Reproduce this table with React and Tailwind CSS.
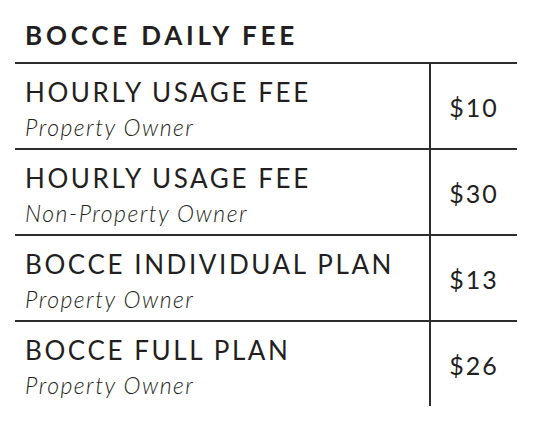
const rows = [
  { name: "HOURLY USAGE FEE", who: "Property Owner", price: "$10" },
  { name: "HOURLY USAGE FEE", who: "Non-Property Owner", price: "$30" },
  { name: "BOCCE INDIVIDUAL PLAN", who: "Property Owner", price: "$13" },
  { name: "BOCCE FULL PLAN", who: "Property Owner", price: "$26" },
];

export default function App() {
  return (
    <div className="w-[537px] h-[422px] bg-white text-[#231f20] font-['Lato',sans-serif]">
      <div className="w-[502px] ml-[15px] pt-[20px]">
        <h2 className="pl-[10px] text-[26px] leading-[30px] font-bold tracking-[3.8px] h-[42px]">
          BOCCE DAILY FEE
        </h2>
        <div className="border-t-2 border-[#2d2d2d]">
          {rows.map((r, i) => (
            <div
              key={i}
              className={
                "grid grid-cols-[414px_1fr] " +
                (i < rows.length - 1 ? "h-[86px] border-b-2 border-[#2d2d2d]" : "h-[84px]")
              }
            >
              <div className="pl-[10px] flex flex-col justify-center pt-[8px]">
                <div className="text-[26px] leading-[34px] tracking-[2.6px]">
                  {r.name}
                </div>
                <div className="text-[23px] leading-[36px] italic font-light tracking-[1.5px]">
                  {r.who}
                </div>
              </div>
              <div className="border-l-2 border-[#2d2d2d] flex items-center justify-center pt-[4px]">
                <span className="text-[25px] tracking-[2px]">{r.price}</span>
              </div>
            </div>
          ))}
        </div>
      </div>
    </div>
  );
}
